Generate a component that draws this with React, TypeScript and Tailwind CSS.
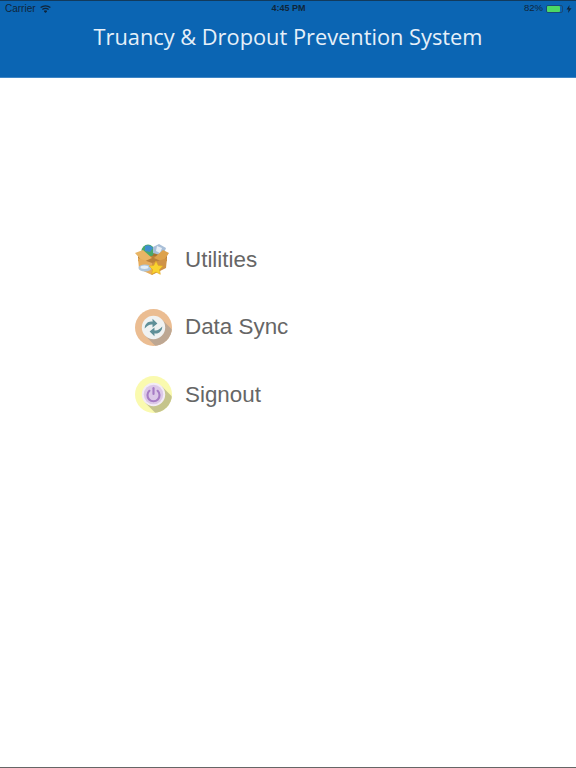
const UtilitiesIcon = () => (
  <svg width="37" height="38" viewBox="1 0 37 38">
    <path d="M7 12 L19 7 L31 12 L19 20z" fill="#a8732f" />
    <circle cx="14" cy="10" r="6.5" fill="#4aa86a" />
    <path d="M11 5 a6.5 6.5 0 0 1 8 2 l-3 4 l-5 -1z" fill="#3f8fd0" />
    <path d="M19 6 l6 -3 l7 4 l-3 8 l-10 -3z" fill="#a9bfd8" />
    <path d="M23 5 l5 2 l-2 5 l-4 -2z" fill="#e8eef5" />
    <path d="M4 15 L33 15 V20 L18 25 L4 20z" fill="#b9803a" />
    <path d="M1 12 l8 -3 l9 8 l-9 4z" fill="#e8b565" />
    <path d="M35 12 l-6 -3 l-9 8 l9 4z" fill="#dda24c" />
    <path d="M4 17 l14 5 v12 l-13 -6z" fill="#e6ac5c" />
    <path d="M18 22 l15 -5 l-1 10 l-14 7z" fill="#cf9347" />
    <ellipse cx="11" cy="27" rx="6.5" ry="3.4" fill="#aec6dc" />
    <ellipse cx="10.5" cy="26.2" rx="4" ry="1.7" fill="#e4eef6" />
    <path d="M22 20 l2.2 4.4 l4.8 .7 l-3.5 3.4 l.8 4.8 l-4.3 -2.3 l-4.3 2.3 l.8 -4.8 l-3.5 -3.4 l4.8 -.7z" fill="#f9d32f" stroke="#e0a526" strokeWidth="0.6" />
  </svg>
)

const SyncIcon = () => (
  <svg width="37" height="37" viewBox="0 0 38 38">
    <defs>
      <clipPath id="syncClip">
        <circle cx="19" cy="19" r="19" />
      </clipPath>
    </defs>
    <circle cx="19" cy="19" r="19" fill="#ebbd92" />
    <path d="M10.5 27.5 L27.5 10.5 L44 27 L27 44z" fill="#bda793" clipPath="url(#syncClip)" />
    <circle cx="19" cy="19" r="12" fill="#f0f2f2" />
    <path d="M10 20 c0 -5 4 -8 8 -7 v-3 l5 5 l-5 4 v-3 c-3 -.5 -5 1 -8 4z" fill="#5f8f98" />
    <path d="M28 18 c0 5 -4 8 -8 7 v3 l-5 -5 l5 -4 v3 c3 .5 5 -1 8 -4z" fill="#5f8f98" />
  </svg>
)

const PowerIcon = () => (
  <svg width="37" height="37" viewBox="0 0 38 38">
    <defs>
      <clipPath id="powerClip">
        <circle cx="19" cy="19" r="19" />
      </clipPath>
    </defs>
    <circle cx="19" cy="19" r="19" fill="#fafaaf" />
    <path d="M10.5 27.5 L27.5 10.5 L44 27 L27 44z" fill="#c5c48c" clipPath="url(#powerClip)" />
    <circle cx="19" cy="19" r="12" fill="#f3ebf6" />
    <circle cx="19" cy="19" r="10" fill="#dcc8e8" />
    <path d="M14.8 15.2 a6.2 6.2 0 1 0 8.4 0" fill="none" stroke="#a67cc4" strokeWidth="2.2" strokeLinecap="round" />
    <path d="M19 12.5 v6" stroke="#a67cc4" strokeWidth="2.2" strokeLinecap="round" />
  </svg>
)

const WifiIcon = () => (
  <svg width="11" height="8" viewBox="0 0 11 8" fill="none" stroke="#10253a" strokeWidth="1.3">
    <path d="M.6 2.6 C3.4 .2 7.6 .2 10.4 2.6" />
    <path d="M2.4 4.5 C4 3.1 7 3.1 8.6 4.5" />
    <path d="M4 6.2 C4.9 5.5 6.1 5.5 7 6.2 L5.5 7.6z" fill="#10253a" strokeWidth="0.8" />
  </svg>
)

const items = [
  { label: 'Utilities', icon: <UtilitiesIcon /> },
  { label: 'Data Sync', icon: <SyncIcon /> },
  { label: 'Signout', icon: <PowerIcon /> },
]

export default function App() {
  return (
    <div className="w-[576px] h-[768px] bg-white flex flex-col overflow-hidden border-b border-[#666666]">
      <header className="h-[78px] shrink-0 bg-[#0b65b3] border-t border-[#123a5c] border-b border-b-[#3f86c6]">
        <div className="h-[15px] pl-[5px] pr-[4px] grid grid-cols-3 items-center text-[10px] text-[#10253a] font-['Liberation_Sans',sans-serif]">
          <div className="flex items-center gap-[4px]">
            <span>Carrier</span>
            <WifiIcon />
          </div>
          <div className="text-center text-[9px] font-bold">4:45 PM</div>
          <div className="flex items-center justify-end">
            <span className="text-[9.5px]">82%</span>
            <div className="ml-[3px] w-[17px] h-[8px] border border-[#1a4a78] rounded-[2px]">
              <div className="w-[84%] h-full rounded-[1px] bg-[#4cd964]" />
            </div>
            <svg width="6" height="8" viewBox="0 0 6 8" fill="#10253a" className="ml-[3px]">
              <path d="M3.5 0 L.5 4.6 H2.6 L2 8 L5.5 3.2 H3.2z" />
            </svg>
          </div>
        </div>
        <h1 className="mt-[6px] text-center text-[21.8px] leading-[30px] text-[#e6f0f9] font-['Open_Sans',sans-serif]">
          Truancy &amp; Dropout Prevention System
        </h1>
      </header>
      <main className="pt-[148px] pl-[135px] flex flex-col">
        {items.map((item) => (
          <div key={item.label} className="h-[67.5px] flex items-center gap-[13px]">
            {item.icon}
            <span className="text-[22.4px] text-[#666666] font-['Liberation_Sans',sans-serif]">
              {item.label}
            </span>
          </div>
        ))}
      </main>
    </div>
  )
}
